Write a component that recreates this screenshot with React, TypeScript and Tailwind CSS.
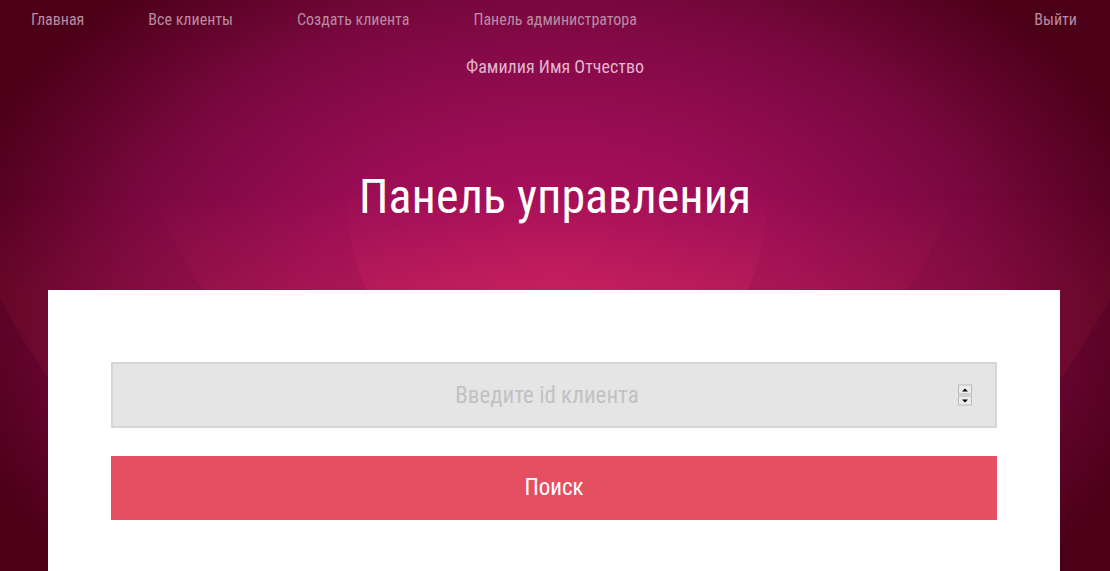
import { useState } from "react";

const links = ["Главная", "Все клиенты", "Создать клиента", "Панель администратора"];

function Spinner() {
  return (
    <div className="absolute right-[25px] top-1/2 flex -translate-y-1/2 flex-col gap-px">
      <span className="flex h-[10px] w-[14px] items-center justify-center border border-[#b9b9b9] bg-[#ececec]">
        <span className="h-0 w-0 border-x-[3px] border-b-[3px] border-x-transparent border-b-black" />
      </span>
      <span className="flex h-[10px] w-[14px] items-center justify-center border border-[#b9b9b9] bg-[#ececec]">
        <span className="h-0 w-0 border-x-[3px] border-t-[3px] border-x-transparent border-t-black" />
      </span>
    </div>
  );
}

export default function App() {
  const [clientId, setClientId] = useState("");

  return (
    <div className="relative h-[571px] overflow-hidden font-['Roboto',sans-serif] font-stretch-condensed bg-[radial-gradient(ellipse_620px_420px_at_555px_300px,#b8145f_0%,#9a0d55_40%,#7a0840_70%,#4c0018_100%)]">
      {/* stage light arcs */}
      <div className="pointer-events-none absolute inset-0 bg-[radial-gradient(circle_210px_at_557px_202px,rgba(245,60,110,0.16)_99.5%,transparent_100%),radial-gradient(circle_428px_at_555px_47px,rgba(235,60,90,0.09)_99.7%,transparent_100%),radial-gradient(circle_625px_at_555px_12px,rgba(225,70,60,0.08)_99.8%,transparent_100%)] [mask-image:linear-gradient(to_bottom,transparent_190px,black_300px)]" />

      <div className="relative">
        {/* Top nav */}
        <nav className="flex h-[39px] items-center justify-between pl-[31px] pr-[33px] text-[16px] text-[#b98aa2]">
          <div className="flex items-center gap-[64px]">
            {links.map((l) => (
              <a key={l} href="#" className="hover:text-white">
                {l}
              </a>
            ))}
          </div>
          <a href="#" className="hover:text-white">
            Выйти
          </a>
        </nav>

        <p className="mt-[16px] text-center text-[18px] leading-[24px] text-[#e3b3cf]">
          Фамилия Имя Отчество
        </p>

        <h1 className="mt-[90px] text-center text-[48px] leading-[56px] text-white">
          Панель управления
        </h1>

        {/* Card */}
        <div className="ml-[48px] mr-[50px] mt-[65px] bg-white px-[63px] pb-[80px] pt-[72px]">
          <div className="relative">
            <input
              type="text"
              value={clientId}
              onChange={(e) => setClientId(e.target.value)}
              placeholder="Введите id клиента"
              className="h-[66px] w-full border-2 border-[#d6d6d6] bg-[#e5e5e5] pr-[14px] text-center text-[23px] text-[#555] outline-none placeholder:text-[#c2c2c2]"
            />
            <Spinner />
          </div>

          <button className="mt-[28px] h-[64px] w-full bg-[#e54f62] text-[23px] text-white">
            Поиск
          </button>
        </div>
      </div>
    </div>
  );
}
